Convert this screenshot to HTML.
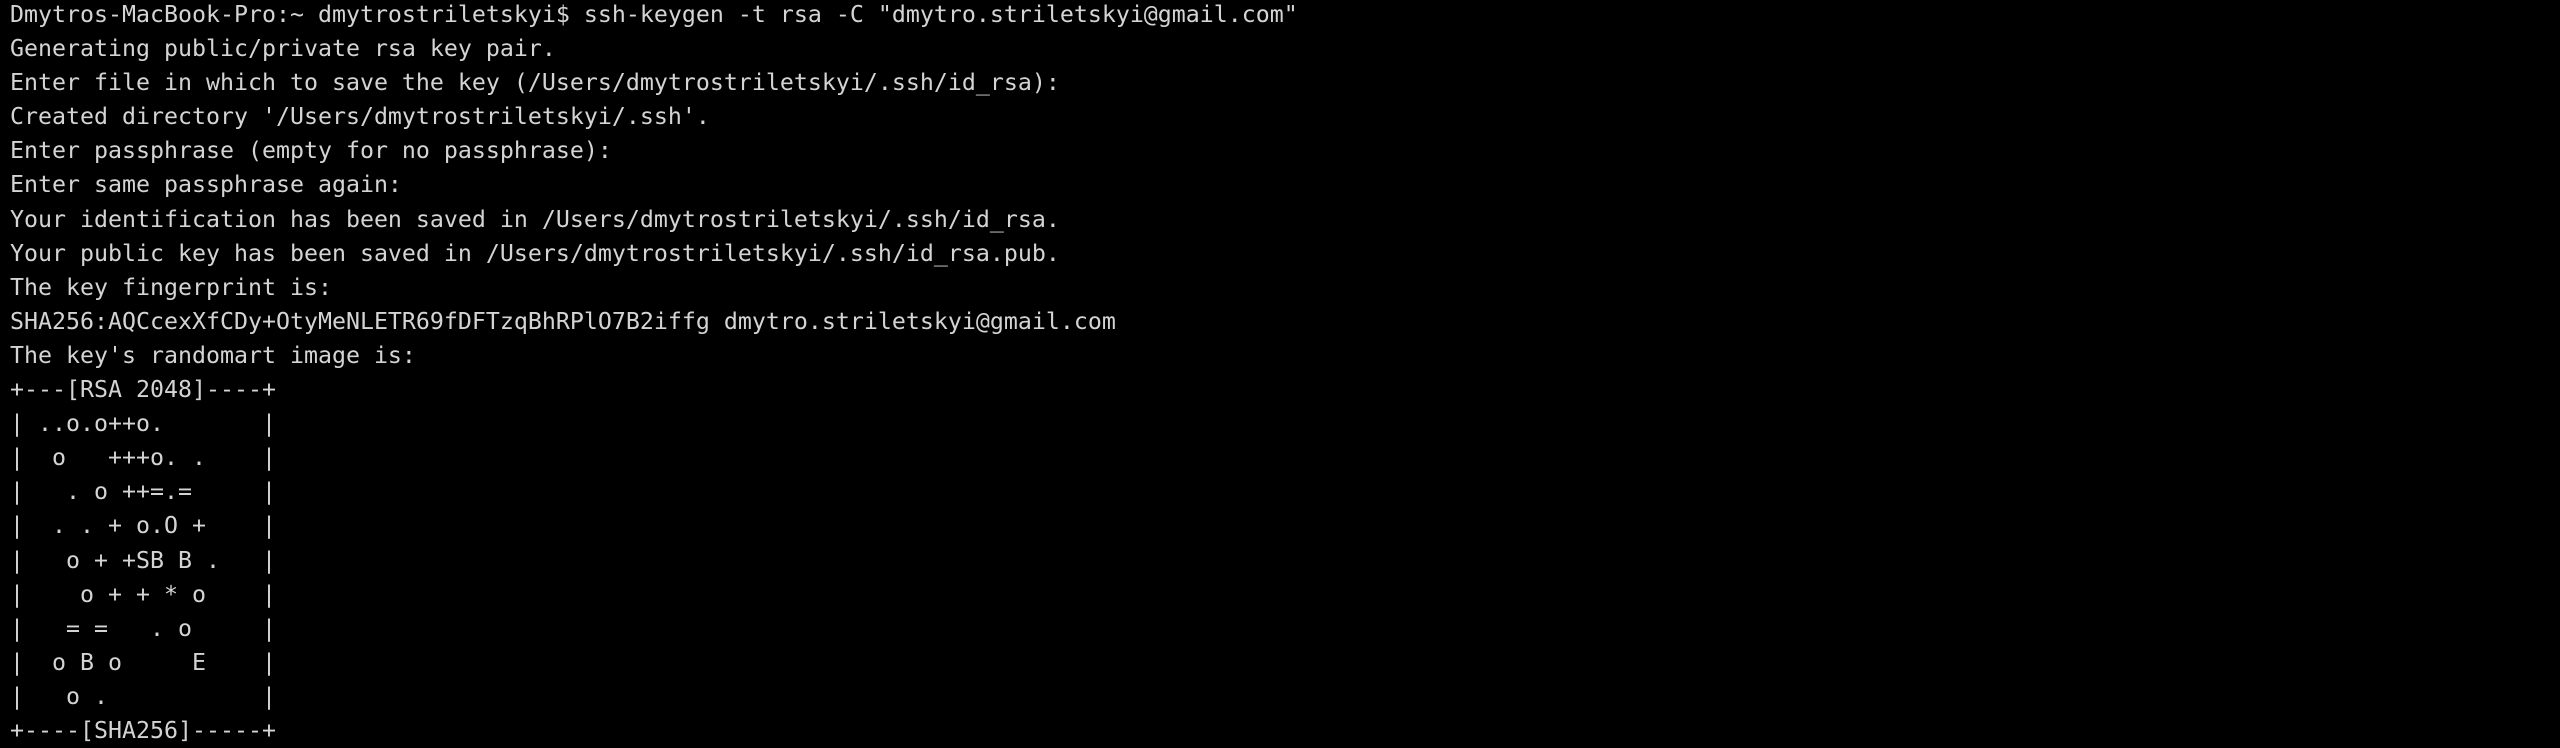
<!DOCTYPE html>
<html><head><meta charset="utf-8"><style>
html,body{margin:0;padding:0;background:#000;width:2560px;height:744px;overflow:hidden}
pre{margin:0;position:absolute;left:10px;top:-2px;font-family:"DejaVu Sans Mono","Liberation Mono",monospace;font-size:23.25px;line-height:34.1px;color:#d4d4d4;white-space:pre}
</style></head><body><pre>Dmytros-MacBook-Pro:~ dmytrostriletskyi$ ssh-keygen -t rsa -C "dmytro.striletskyi@gmail.com"
Generating public/private rsa key pair.
Enter file in which to save the key (/Users/dmytrostriletskyi/.ssh/id_rsa):
Created directory '/Users/dmytrostriletskyi/.ssh'.
Enter passphrase (empty for no passphrase):
Enter same passphrase again:
Your identification has been saved in /Users/dmytrostriletskyi/.ssh/id_rsa.
Your public key has been saved in /Users/dmytrostriletskyi/.ssh/id_rsa.pub.
The key fingerprint is:
SHA256:AQCcexXfCDy+OtyMeNLETR69fDFTzqBhRPlO7B2iffg dmytro.striletskyi@gmail.com
The key's randomart image is:
+---[RSA 2048]----+
| ..o.o++o.       |
|  o   +++o. .    |
|   . o ++=.=     |
|  . . + o.O +    |
|   o + +SB B .   |
|    o + + * o    |
|   = =   . o     |
|  o B o     E    |
|   o .           |
+----[SHA256]-----+</pre></body></html>
